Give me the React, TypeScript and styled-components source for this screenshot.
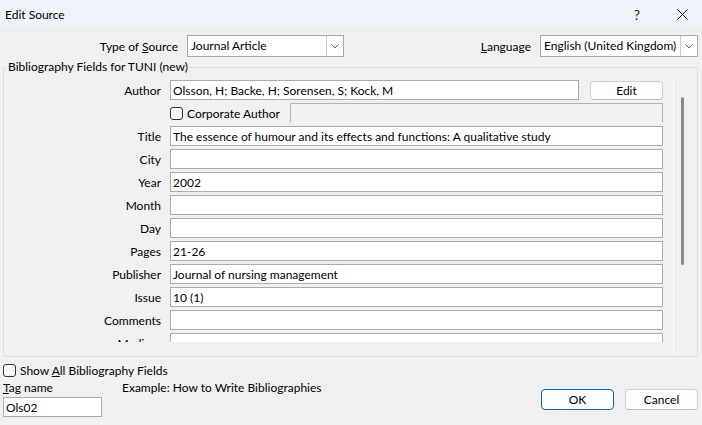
import React from 'react'
import styled, { createGlobalStyle } from 'styled-components'

const GlobalStyle = createGlobalStyle`
  html, body {
    margin: 0;
    padding: 0;
  }
  body {
    background: #f0f0f0;
    font-family: Lato, "Open Sans", sans-serif;
    font-size: 12px;
    color: #000;
  }
  * {
    box-sizing: border-box;
  }
`

const Window = styled.div`
  width: 702px;
  height: 425px;
  display: flex;
  flex-direction: column;
  background: #f0f0f0;
  overflow: hidden;
`

const TitleBar = styled.div`
  height: 28px;
  flex: none;
  display: flex;
  align-items: center;
  background: #eef3f9;
  padding-left: 5px;
`

const Title = styled.span`
  flex: 1;
`

const TitleButton = styled.div<{ $gap?: number }>`
  width: 40px;
  height: 28px;
  display: flex;
  align-items: center;
  justify-content: center;
  margin-right: ${(p) => p.$gap ?? 0}px;
  font-size: 14px;
  color: #1a1a1a;
`

const Body = styled.div`
  flex: 1;
  display: flex;
  flex-direction: column;
  padding: 7px 4px 0 3px;
`

const TopRow = styled.div`
  display: flex;
  align-items: center;
  height: 22px;
`

const FieldLabel = styled.span<{ $width?: number }>`
  width: ${(p) => (p.$width ? `${p.$width}px` : 'auto')};
  text-align: right;
  margin-right: 9px;
  white-space: nowrap;
`

const Spacer = styled.div`
  flex: 1;
`

const Select = styled.div<{ $width: number }>`
  width: ${(p) => p.$width}px;
  height: 22px;
  display: flex;
  background: #fff;
  border: 1px solid #a9a9a9;
`

const SelectValue = styled.span`
  flex: 1;
  padding-left: 3px;
  line-height: 20px;
  white-space: nowrap;
  overflow: hidden;
`

const ArrowBox = styled.span`
  width: 17px;
  display: flex;
  align-items: center;
  justify-content: center;
  border-left: 1px solid #cdcdcd;
`

const Group = styled.fieldset`
  margin: 2px 0 0;
  padding: 0;
  border: 1px solid #dcdcdc;
  min-width: 0;
`

const Legend = styled.legend`
  margin-left: 3px;
  padding: 0 1px;
  line-height: 16px;
`

const FieldsPane = styled.div`
  display: flex;
  height: 281px;
`

const Viewport = styled.div`
  flex: 1;
  height: 267px;
  overflow: hidden;
  padding: 5px 10px 0 0;
  display: flex;
  flex-direction: column;
  gap: 3px;
`

const Row = styled.div`
  display: grid;
  grid-template-columns: 157px 1fr;
  column-gap: 9px;
  align-items: center;
  height: 20px;
  flex: none;
`

const RowLabel = styled.span`
  text-align: right;
  white-space: nowrap;
`

const TextBox = styled.input<{ $width?: number }>`
  width: ${(p) => (p.$width ? `${p.$width}px` : '100%')};
  min-width: 0;
  height: 20px;
  margin: 0;
  padding: 0 2px;
  border: 1px solid #ababab;
  background: #fff;
  font: inherit;
  color: #000;
  outline: none;
`

const DisabledBox = styled.div`
  flex: 1;
  height: 20px;
  border: 1px solid #b4b4b4;
  border-bottom-color: #fcfcfc;
  background: #f0f0f0;
`

const Inline = styled.div<{ $gap?: number }>`
  display: flex;
  align-items: center;
  gap: ${(p) => p.$gap ?? 0}px;
  min-width: 0;
`

const Button = styled.div<{ $primary?: boolean; $height?: number }>`
  width: 73px;
  height: ${(p) => p.$height ?? 21}px;
  flex: none;
  display: flex;
  align-items: center;
  justify-content: center;
  background: #fdfdfd;
  border: 1px solid ${(p) => (p.$primary ? '#0067c0' : '#d0d0d0')};
  border-bottom-color: ${(p) => (p.$primary ? '#0067c0' : '#bdbdbd')};
  border-radius: 4px;
`

const CheckLabel = styled.label<{ $width?: number }>`
  display: flex;
  align-items: center;
  gap: 4px;
  width: ${(p) => (p.$width ? `${p.$width}px` : 'auto')};
  flex: none;
  white-space: nowrap;
`

const CheckBox = styled.span`
  width: 13px;
  height: 13px;
  flex: none;
  border: 1px solid #333;
  border-radius: 3px;
  background: #f7f7f7;
`

const Track = styled.div`
  width: 24px;
  margin: 3px 0;
  border-left: 1px solid #fff;
  padding: 19px 0 0 7px;
`

const Thumb = styled.div`
  width: 3px;
  height: 168px;
  border-radius: 2px;
  background: #8a8a8a;
`

const ShowAllRow = styled.div`
  margin-top: 6px;
  height: 14px;
  display: flex;
  align-items: center;
`

const BottomRow = styled.div`
  display: flex;
  align-items: flex-start;
  margin-top: 3px;
`

const TagColumn = styled.div`
  width: 119px;
  display: flex;
  flex-direction: column;
  gap: 1px;
`

const LineText = styled.span`
  line-height: 16px;
  white-space: nowrap;
`

const Buttons = styled.div`
  margin-left: auto;
  margin-top: 9px;
  display: flex;
  gap: 11px;
`

const Chevron = () => (
  <svg width="8" height="5" viewBox="0 0 8 5">
    <path d="M0.5 0.5 L4 4 L7.5 0.5" fill="none" stroke="#5a5a5a" strokeWidth="1" />
  </svg>
)

const CloseIcon = () => (
  <svg width="11" height="11" viewBox="0 0 11 11">
    <path d="M0.5 0.5 L10.5 10.5 M10.5 0.5 L0.5 10.5" stroke="#1a1a1a" strokeWidth="1" />
  </svg>
)

const fields: [string, string][] = [
  ['Title', 'The essence of humour and its effects and functions: A qualitative study'],
  ['City', ''],
  ['Year', '2002'],
  ['Month', ''],
  ['Day', ''],
  ['Pages', '21-26'],
  ['Publisher', 'Journal of nursing management'],
  ['Issue', '10 (1)'],
  ['Comments', ''],
  ['Medium', ''],
]

export default function App() {
  return (
    <>
      <GlobalStyle />
      <Window>
        <TitleBar>
          <Title>Edit Source</Title>
          <TitleButton $gap={5}>?</TitleButton>
          <TitleButton>
            <CloseIcon />
          </TitleButton>
        </TitleBar>

        <Body>
          <TopRow>
            <FieldLabel $width={175}>
              Type of <u>S</u>ource
            </FieldLabel>
            <Select $width={157}>
              <SelectValue>Journal Article</SelectValue>
              <ArrowBox>
                <Chevron />
              </ArrowBox>
            </Select>
            <Spacer />
            <FieldLabel>
              <u>L</u>anguage
            </FieldLabel>
            <Select $width={158}>
              <SelectValue>English (United Kingdom)</SelectValue>
              <ArrowBox>
                <Chevron />
              </ArrowBox>
            </Select>
          </TopRow>

          <Group>
            <Legend>Bibliography Fields for TUNI (new)</Legend>
            <FieldsPane>
              <Viewport>
                <Row>
                  <RowLabel>Author</RowLabel>
                  <Inline $gap={11}>
                    <TextBox readOnly defaultValue="Olsson, H; Backe, H; Sorensen, S; Kock, M" />
                    <Button $height={19}>Edit</Button>
                  </Inline>
                </Row>
                <Row>
                  <span />
                  <Inline>
                    <CheckLabel $width={120}>
                      <CheckBox />
                      <span>Corporate Author</span>
                    </CheckLabel>
                    <DisabledBox />
                  </Inline>
                </Row>
                {fields.map(([label, value]) => (
                  <Row key={label}>
                    <RowLabel>{label}</RowLabel>
                    <TextBox readOnly defaultValue={value} />
                  </Row>
                ))}
              </Viewport>
              <Track>
                <Thumb />
              </Track>
            </FieldsPane>
          </Group>

          <ShowAllRow>
            <CheckLabel>
              <CheckBox />
              <span>
                Show <u>A</u>ll Bibliography Fields
              </span>
            </CheckLabel>
          </ShowAllRow>

          <BottomRow>
            <TagColumn>
              <LineText>
                <u>T</u>ag name
              </LineText>
              <TextBox readOnly defaultValue="Ols02" $width={99} />
            </TagColumn>
            <LineText>Example: How to Write Bibliographies</LineText>
            <Buttons>
              <Button $primary>OK</Button>
              <Button>Cancel</Button>
            </Buttons>
          </BottomRow>
        </Body>
      </Window>
    </>
  )
}
